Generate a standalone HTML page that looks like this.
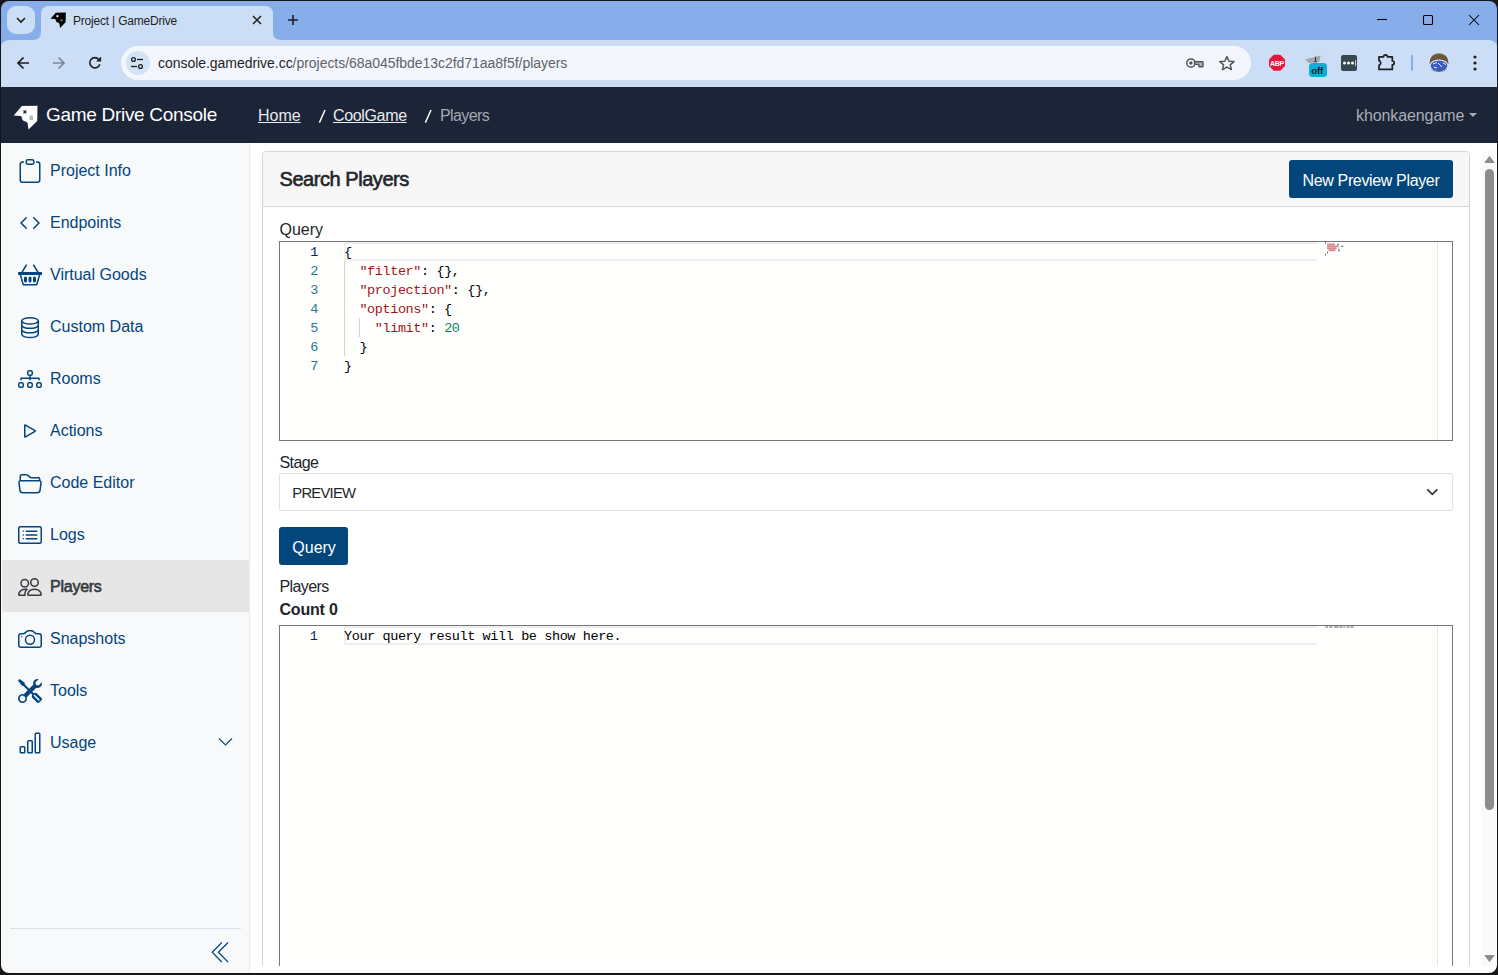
<!DOCTYPE html>
<html><head><meta charset="utf-8"><title>Project | GameDrive</title>
<style>
*{box-sizing:border-box;margin:0;padding:0}
html,body{width:1498px;height:975px;overflow:hidden;background:#fff;font-family:"Liberation Sans",sans-serif;position:relative}
.a{position:absolute}
.t{position:absolute;white-space:pre;line-height:1}
svg{position:absolute;overflow:visible}
#frame{position:absolute;left:1px;top:1px;width:1496px;height:972px;border-radius:8px;box-shadow:0 0 0 30px #171717;z-index:100;pointer-events:none}
#tabs{position:absolute;left:0;top:0;width:1498px;height:48px;background:#87adea}
#toolbar{position:absolute;left:0;top:40px;width:1498px;height:47px;background:#ccddf6;border-top-left-radius:9px;border-top-right-radius:9px}
#nav{position:absolute;left:0;top:87px;width:1498px;height:56px;background:#1c2438}
#side{position:absolute;left:0;top:143px;width:250px;height:832px;background:#f8f9fa;border-right:1px solid #e9ecef}
.ic{position:absolute;width:24px;height:24px;fill:#03457f}
.lbl{position:absolute;white-space:pre;line-height:1;font-size:16px;color:#03457f;left:50px}
</style></head><body>
<!-- ============ CHROME ============ -->
<div id="tabs"></div>
<div id="toolbar"></div>
<!-- tab search -->
<div class="a" style="left:7px;top:6px;width:28px;height:28px;border-radius:9px;background:#ccddf6"></div>
<svg width="1498" height="90" style="left:0;top:0">
  <path d="M17 18 L21 22 L25 18" fill="none" stroke="#1f1f1f" stroke-width="1.6"/>
  <!-- active tab -->
  <path d="M33 40 Q41 40 41 32 L41 14 Q41 6 49 6 L265 6 Q273 6 273 14 L273 32 Q273 40 281 40 Z" fill="#ccddf6"/>
  <!-- tab close -->
  <path d="M253 16 L261 24 M261 16 L253 24" stroke="#1f1f1f" stroke-width="1.5"/>
  <!-- new tab -->
  <path d="M293 15 V25 M288 20 H298" stroke="#1f1f1f" stroke-width="1.6"/>
  <!-- window controls -->
  <path d="M1377 19.5 H1387" stroke="#000" stroke-width="1.1"/>
  <rect x="1423.5" y="15.5" width="9" height="9" rx="1" fill="none" stroke="#000" stroke-width="1.1"/>
  <path d="M1469 15 L1479 25 M1479 15 L1469 25" stroke="#000" stroke-width="1.05"/>
  <!-- back/forward/reload -->
  <path d="M29 63 H18.5 M23.5 57.5 L18 63 L23.5 68.5" fill="none" stroke="#1f1f1f" stroke-width="1.7"/>
  <path d="M53 63 H63.5 M58.5 57.5 L64 63 L58.5 68.5" fill="none" stroke="#7d8797" stroke-width="1.7"/>
  <path d="M98.8 59.4 A5.1 5.1 0 1 0 99.8 64.2" fill="none" stroke="#1f1f1f" stroke-width="1.6"/>
  <path d="M96 61.6 H101.1 V56.5 Z" fill="#1f1f1f"/>
</svg>
<!-- favicon -->
<svg width="26" height="26" viewBox="0 0 26 26" style="left:49.6px;top:11.6px;width:16.8px;height:16.8px">
  <path d="M8.85 1.1 L24.5 0.75 L24.2 15.9 L15.5 24.6 L14.6 18 Q13.5 16.2 10.9 15.9 Q9 15 8.85 12.4 Q8.5 10.8 7.5 10.9 L0.8 10.5 Z" fill="#000"/>
  <rect x="10" y="5" width="3" height="3" fill="#fff"/>
  <rect x="16" y="11" width="3.5" height="3.5" fill="#666"/>
</svg>
<div class="t" style="left:73px;top:14.5px;font-size:12px;color:#1f1f1f;letter-spacing:-0.2px">Project | GameDrive</div>
<!-- omnibox -->
<div class="a" style="left:121px;top:46px;width:1130px;height:34px;border-radius:17px;background:#f3f6fc"></div>
<div class="a" style="left:126px;top:51px;width:24px;height:24px;border-radius:12px;background:#d3e2f7"></div>
<svg width="1498" height="90" style="left:0;top:0">
  <circle cx="133.5" cy="59.5" r="1.9" fill="none" stroke="#1f1f1f" stroke-width="1.3"/>
  <path d="M137 59.5 H143" stroke="#1f1f1f" stroke-width="1.3"/>
  <path d="M131 66.5 H137" stroke="#1f1f1f" stroke-width="1.3"/>
  <circle cx="140.5" cy="66.5" r="1.9" fill="none" stroke="#1f1f1f" stroke-width="1.3"/>
</svg>
<div class="t" style="left:158px;top:56px;font-size:14px;color:#1f1f1f;letter-spacing:-0.04px">console.gamedrive.cc<span style="color:#5f6368">/projects/68a045fbde13c2fd71aa8f5f/players</span></div>
<svg width="1498" height="90" style="left:0;top:0">
  <!-- key -->
  <circle cx="1190.9" cy="63" r="4.1" fill="none" stroke="#545454" stroke-width="1.5"/>
  <circle cx="1190.9" cy="63" r="1.7" fill="#545454"/>
  <path d="M1194.6 61.8 H1202.4 Q1203 61.8 1203 62.4 V66.2 Q1203 66.8 1202.4 66.8 H1199.4 Q1198.8 66.8 1198.8 66.2 V64.4 H1194.6 Z" fill="#b4b4b4" stroke="#545454" stroke-width="1.4" stroke-linejoin="round"/>
  <!-- star -->
  <path d="M1226.9 56.6 L1229 61.2 L1234 61.6 L1230.2 64.9 L1231.4 69.6 L1226.9 67.1 L1222.4 69.6 L1223.6 64.9 L1219.8 61.6 L1224.8 61.2 Z" fill="none" stroke="#555" stroke-width="1.5" stroke-linejoin="round"/>
  <!-- ABP -->
  <path d="M1273.7 54.8 H1280.3 L1285 59.5 V66.1 L1280.3 70.8 H1273.7 L1269 66.1 V59.5 Z" fill="#e8163a"/>
  <text x="1277" y="65.9" font-family="Liberation Sans" font-weight="bold" font-size="7" fill="#fff" text-anchor="middle" letter-spacing="-0.3">ABP</text>
  <!-- off ext -->
  <path d="M1305.2 59.5 L1320.6 55.5 L1319.4 62 L1308.8 63 Z" fill="#a6a6a6"/>
  <path d="M1315.5 56.8 V61.6 M1314.3 61.6 H1316.7" stroke="#333" stroke-width="1.1"/>
  <rect x="1309" y="62.9" width="18" height="14.1" rx="3.5" fill="#10acd6"/>
  <text x="1317.2" y="73.8" font-family="Liberation Sans" font-weight="bold" font-size="9.6" fill="#14202a" text-anchor="middle" letter-spacing="-0.2">off</text>
  <!-- dots ext -->
  <rect x="1341" y="55" width="16" height="16" rx="2" fill="#37474f"/>
  <circle cx="1344.5" cy="63" r="1.5" fill="#fff"/><circle cx="1348.5" cy="63" r="1.5" fill="#fff"/><circle cx="1352.5" cy="63" r="1.5" fill="#fff"/>
  <path d="M1355.5 60 V66" stroke="#ccc" stroke-width="1"/>
  <!-- puzzle -->
  <path d="M1379 56.8 H1383.6 A1.9 1.9 0 0 1 1387.4 56.8 H1392.3 V61 A1.9 1.9 0 0 1 1392.3 64.8 V69.4 H1379 V65.2 A2.4 2.4 0 0 0 1379 60.6 Z" fill="none" stroke="#1f1f1f" stroke-width="1.7" stroke-linejoin="round"/>
  <!-- separator -->
  <path d="M1412 55 V70.5" stroke="#87adea" stroke-width="2"/>
  <!-- avatar -->
  <defs><clipPath id="avc"><circle cx="1439" cy="63" r="10"/></clipPath></defs>
  <g clip-path="url(#avc)">
    <rect x="1429" y="53" width="20" height="20" fill="#ccddf6"/>
    <path d="M1429.5 64 Q1429.5 53 1439 53 Q1448.5 53 1448.5 64 Z" fill="#6b5640"/>
    <path d="M1432 56 Q1439 52 1446 56 L1446 55 Q1439 51 1432 55 Z" fill="#c09a6a"/>
    <ellipse cx="1439" cy="66" rx="9.6" ry="6.6" fill="#e9eef6"/>
    <ellipse cx="1439" cy="65.8" rx="8.4" ry="5.4" fill="#3a5cc0"/>
    <path d="M1433 64 L1437 62.5 M1438 63 L1442 67 M1443 63 L1446 64.5 M1434 67 L1437 68" stroke="#e8eef8" stroke-width="1"/>
    <path d="M1430 69 Q1439 74 1448 69" stroke="#555" stroke-width="0.8" fill="none"/>
  </g>
  <!-- kebab -->
  <circle cx="1475" cy="57" r="1.6" fill="#1f1f1f"/><circle cx="1475" cy="63" r="1.6" fill="#1f1f1f"/><circle cx="1475" cy="69" r="1.6" fill="#1f1f1f"/>
</svg>
<!-- ============ NAVBAR ============ -->
<div id="nav"></div>
<svg width="26" height="26" viewBox="0 0 26 26" style="left:13px;top:105px;width:26px;height:26px">
  <path d="M8.85 1.1 L24.5 0.75 L24.2 15.9 L15.5 24.6 L14.6 18 Q13.5 16.2 10.9 15.9 Q9 15 8.85 12.4 Q8.5 10.8 7.5 10.9 L0.8 10.5 Z" fill="#fff"/>
  <path d="M10.5 5.5 L13.3 8.3 M13.3 5.5 L10.5 8.3" stroke="#1c2438" stroke-width="1.2"/>
  <rect x="16.5" y="10.5" width="3.5" height="4.5" fill="#b8bcc6"/>
</svg>
<div class="t" style="left:46px;top:105px;font-size:19px;color:#fff;letter-spacing:-0.3px">Game Drive Console</div>
<div class="t" style="left:258px;top:108.4px;font-size:16px;color:#e9ebee;text-decoration:underline;text-underline-offset:1.2px">Home</div>

<div class="t" style="left:333px;top:108.4px;font-size:16px;color:#e9ebee;text-decoration:underline;text-underline-offset:1.2px;letter-spacing:-0.35px">CoolGame</div>

<div class="t" style="left:440px;top:108.4px;font-size:16px;color:#a4a8b0;letter-spacing:-0.6px">Players</div>
<svg width="1498" height="150" style="left:0;top:0"><path d="M325 110 L319.4 122.6 M431 110 L425.4 122.6" stroke="#ffffff" stroke-width="1.45"/></svg>
<div class="t" style="left:1356px;top:107.8px;font-size:16px;color:#a9adb5;letter-spacing:-0.1px">khonkaengame</div>
<svg width="1498" height="150" style="left:0;top:0"><path d="M1469 113 H1477 L1473 117 Z" fill="#a9adb5"/></svg>
<!-- ============ SIDEBAR ============ -->
<div id="side"></div>
<!-- icons -->
<svg class="ic" viewBox="0 0 16 16" style="left:18px;top:159px"><path d="M4 1.5H3a2 2 0 0 0-2 2V14a2 2 0 0 0 2 2h10a2 2 0 0 0 2-2V3.5a2 2 0 0 0-2-2h-1v1h1a1 1 0 0 1 1 1V14a1 1 0 0 1-1 1H3a1 1 0 0 1-1-1V3.5a1 1 0 0 1 1-1h1z"/><path d="M9.5 1a.5.5 0 0 1 .5.5v1a.5.5 0 0 1-.5.5h-3a.5.5 0 0 1-.5-.5v-1a.5.5 0 0 1 .5-.5zm-3-1A1.5 1.5 0 0 0 5 1.5v1A1.5 1.5 0 0 0 6.5 4h3A1.5 1.5 0 0 0 11 2.5v-1A1.5 1.5 0 0 0 9.5 0z"/></svg>
<div class="lbl" style="top:162.5px">Project Info</div>
<svg class="ic" viewBox="0 0 16 16" style="left:18px;top:211px"><path d="M5.854 4.854a.5.5 0 1 0-.708-.708l-3.5 3.5a.5.5 0 0 0 0 .708l3.5 3.5a.5.5 0 0 0 .708-.708L2.707 8zm4.292 0a.5.5 0 0 1 .708-.708l3.5 3.5a.5.5 0 0 1 0 .708l-3.5 3.5a.5.5 0 0 1-.708-.708L13.293 8z"/></svg>
<div class="lbl" style="top:214.5px">Endpoints</div>
<svg class="ic" viewBox="0 0 16 16" style="left:18px;top:263px"><path d="M4 10a1 1 0 0 1 2 0v2a1 1 0 0 1-2 0zm3 0a1 1 0 0 1 2 0v2a1 1 0 0 1-2 0zm3 0a1 1 0 1 1 2 0v2a1 1 0 0 1-2 0z"/><path d="M5.757 1.071a.5.5 0 0 1 .172.686L3.383 6h9.234L10.07 1.757a.5.5 0 1 1 .858-.514L13.783 6H15.5a.5.5 0 0 1 .5.5v1a.5.5 0 0 1-.5.5h-.623l-1.844 6.456a.75.75 0 0 1-.722.544H3.69a.75.75 0 0 1-.722-.544L1.123 8H.5a.5.5 0 0 1-.5-.5v-1A.5.5 0 0 1 .5 6h1.717L5.07 1.243a.5.5 0 0 1 .686-.172zM2.163 8l1.714 6h8.246l1.714-6z"/></svg>
<div class="lbl" style="top:266.5px">Virtual Goods</div>
<svg class="ic" viewBox="0 0 16 16" style="left:18px;top:315px"><g fill="none" stroke="#03457f" stroke-width="1"><ellipse cx="8" cy="3.9" rx="5.5" ry="2.1"/><path d="M2.5 3.9 V12.9 A5.5 2.1 0 0 0 13.5 12.9 V3.9"/><path d="M2.5 6.8 A5.5 2.1 0 0 0 13.5 6.8 M2.5 9.8 A5.5 2.1 0 0 0 13.5 9.8"/></g></svg>
<div class="lbl" style="top:318.5px">Custom Data</div>
<svg class="ic" viewBox="0 0 16 16" style="left:18px;top:367px"><path fill-rule="evenodd" d="M6 3.5A1.5 1.5 0 0 1 7.5 2h1A1.5 1.5 0 0 1 10 3.5v1A1.5 1.5 0 0 1 8.5 6v1H14a.5.5 0 0 1 .5.5v1a.5.5 0 0 1-1 0V8h-5v.5a.5.5 0 0 1-1 0V8h-5v.5a.5.5 0 0 1-1 0v-1A.5.5 0 0 1 2 7h5.5V6A1.5 1.5 0 0 1 6 4.5zM8.5 5a.5.5 0 0 0 .5-.5v-1a.5.5 0 0 0-.5-.5h-1a.5.5 0 0 0-.5.5v1a.5.5 0 0 0 .5.5zM0 11.5A1.5 1.5 0 0 1 1.5 10h1A1.5 1.5 0 0 1 4 11.5v1A1.5 1.5 0 0 1 2.5 14h-1A1.5 1.5 0 0 1 0 12.5zm1.5-.5a.5.5 0 0 0-.5.5v1a.5.5 0 0 0 .5.5h1a.5.5 0 0 0 .5-.5v-1a.5.5 0 0 0-.5-.5zm4.5.5A1.5 1.5 0 0 1 7.5 10h1a1.5 1.5 0 0 1 1.5 1.5v1A1.5 1.5 0 0 1 8.5 14h-1A1.5 1.5 0 0 1 6 12.5zm1.5-.5a.5.5 0 0 0-.5.5v1a.5.5 0 0 0 .5.5h1a.5.5 0 0 0 .5-.5v-1a.5.5 0 0 0-.5-.5zm4.5.5a1.5 1.5 0 0 1 1.5-1.5h1a1.5 1.5 0 0 1 1.5 1.5v1a1.5 1.5 0 0 1-1.5 1.5h-1a1.5 1.5 0 0 1-1.5-1.5zm1.5-.5a.5.5 0 0 0-.5.5v1a.5.5 0 0 0 .5.5h1a.5.5 0 0 0 .5-.5v-1a.5.5 0 0 0-.5-.5z"/></svg>
<div class="lbl" style="top:370.5px">Rooms</div>
<svg class="ic" viewBox="0 0 16 16" style="left:18px;top:419px"><path d="M10.804 8 5 4.633v6.734zm.792-.696a.802.802 0 0 1 0 1.392l-6.363 3.692C4.713 12.69 4 12.345 4 11.692V4.308c0-.653.713-.998 1.233-.696z"/></svg>
<div class="lbl" style="top:422.5px">Actions</div>
<svg class="ic" viewBox="0 0 16 16" style="left:18px;top:471px"><path d="M1 3.5A1.5 1.5 0 0 1 2.5 2h2.764c.958 0 1.76.56 2.311 1.184C7.985 3.648 8.48 4 9 4h4.5A1.5 1.5 0 0 1 15 5.5v.64c.57.265.94.876.856 1.546l-.64 5.124A2.5 2.5 0 0 1 12.733 15H3.266a2.5 2.5 0 0 1-2.481-2.19l-.64-5.124A1.5 1.5 0 0 1 1 6.14zM2 6h12v-.5a.5.5 0 0 0-.5-.5H9c-.964 0-1.71-.629-2.174-1.154C6.374 3.334 5.82 3 5.264 3H2.5a.5.5 0 0 0-.5.5zm-.367 1a.5.5 0 0 0-.496.562l.64 5.124A1.5 1.5 0 0 0 3.266 14h9.468a1.5 1.5 0 0 0 1.489-1.314l.64-5.124A.5.5 0 0 0 14.367 7z"/></svg>
<div class="lbl" style="top:474.5px">Code Editor</div>
<svg class="ic" viewBox="0 0 16 16" style="left:18px;top:523px"><path d="M14.5 3a.5.5 0 0 1 .5.5v9a.5.5 0 0 1-.5.5h-13a.5.5 0 0 1-.5-.5v-9a.5.5 0 0 1 .5-.5zm-13-1A1.5 1.5 0 0 0 0 3.5v9A1.5 1.5 0 0 0 1.5 14h13a1.5 1.5 0 0 0 1.5-1.5v-9A1.5 1.5 0 0 0 14.5 2z"/><path d="M5 8a.5.5 0 0 1 .5-.5h7a.5.5 0 0 1 0 1h-7A.5.5 0 0 1 5 8m0-2.5a.5.5 0 0 1 .5-.5h7a.5.5 0 0 1 0 1h-7a.5.5 0 0 1-.5-.5m0 5a.5.5 0 0 1 .5-.5h7a.5.5 0 0 1 0 1h-7a.5.5 0 0 1-.5-.5m-1-5a.5.5 0 1 1-1 0 .5.5 0 0 1 1 0M4 8a.5.5 0 1 1-1 0 .5.5 0 0 1 1 0m0 2.5a.5.5 0 1 1-1 0 .5.5 0 0 1 1 0"/></svg>
<div class="lbl" style="top:526.5px">Logs</div>
<div class="a" style="left:2px;top:560px;width:247px;height:52px;border-radius:1.5px;background:#e6e6e6"></div>
<svg class="ic" viewBox="0 0 16 16" style="left:18px;top:575px;fill:#343a40"><path d="M15 14s1 0 1-1-1-4-5-4-5 3-5 4 1 1 1 1zm-7.978-1L7 12.996c.001-.264.167-1.03.76-1.72C8.312 10.629 9.282 10 11 10c1.717 0 2.687.63 3.24 1.276.593.69.758 1.457.76 1.72l-.008.002-.014.002zM11 7a2 2 0 1 0 0-4 2 2 0 0 0 0 4m3-2a3 3 0 1 1-6 0 3 3 0 0 1 6 0M6.936 9.28a6 6 0 0 0-1.23-.247A7 7 0 0 0 5 9c-4 0-5 3-5 4q0 1 1 1h4.216A2.24 2.24 0 0 1 5 13c0-1.01.377-2.042 1.09-2.904.243-.294.526-.569.846-.816M4.92 10A5.5 5.5 0 0 0 4 13H1c0-.26.164-1.03.76-1.724.545-.636 1.492-1.256 3.16-1.275ZM1.5 5.5a3 3 0 1 1 6 0 3 3 0 0 1-6 0m3-2a2 2 0 1 0 0 4 2 2 0 0 0 0-4"/></svg>
<div class="lbl" style="top:578.5px;color:#343a40;letter-spacing:-0.25px;-webkit-text-stroke:0.6px #343a40">Players</div>
<svg class="ic" viewBox="0 0 16 16" style="left:18px;top:627px"><path d="M15 12a1 1 0 0 1-1 1H2a1 1 0 0 1-1-1V6a1 1 0 0 1 1-1h1.172a3 3 0 0 0 2.12-.879l.83-.828A1 1 0 0 1 6.827 3h2.344a1 1 0 0 1 .707.293l.828.828A3 3 0 0 0 12.828 5H14a1 1 0 0 1 1 1zM2 4a2 2 0 0 0-2 2v6a2 2 0 0 0 2 2h12a2 2 0 0 0 2-2V6a2 2 0 0 0-2-2h-1.172a2 2 0 0 1-1.414-.586l-.828-.828A2 2 0 0 0 9.172 2H6.828a2 2 0 0 0-1.414.586l-.828.828A2 2 0 0 1 3.172 4z"/><path d="M8 11a2.5 2.5 0 1 1 0-5 2.5 2.5 0 0 1 0 5m0 1a3.5 3.5 0 1 0 0-7 3.5 3.5 0 0 0 0 7M3 6.5a.5.5 0 1 1-1 0 .5.5 0 0 1 1 0"/></svg>
<div class="lbl" style="top:630.5px">Snapshots</div>
<svg class="ic" viewBox="0 0 16 16" style="left:18px;top:679px"><path d="M1 0 0 1l2.2 3.081a1 1 0 0 0 .815.419h.07a1 1 0 0 1 .708.293l2.675 2.675-2.617 2.654A3.003 3.003 0 0 0 0 13a3 3 0 1 0 5.878-.851l2.654-2.617.968.968-.305.914a1 1 0 0 0 .242 1.023l3.27 3.27a.997.997 0 0 0 1.414 0l1.586-1.586a.997.997 0 0 0 0-1.414l-3.27-3.27a1 1 0 0 0-1.023-.242L10.5 9.5l-.96-.96 2.68-2.643A3.005 3.005 0 0 0 16 3q0-.405-.102-.777l-2.14 2.141L12 4l-.364-1.757L13.777.102a3 3 0 0 0-3.675 3.68L7.462 6.46 4.793 3.793a1 1 0 0 1-.293-.707v-.071a1 1 0 0 0-.419-.814zm9.646 10.646a.5.5 0 0 1 .708 0l2.914 2.915a.5.5 0 0 1-.707.707l-2.915-2.914a.5.5 0 0 1 0-.708M3 11l.471.242.529.026.287.445.445.287.026.529L5 13l-.242.471-.026.529-.445.287-.287.445-.529.026L3 15l-.471-.242L2 14.732l-.287-.445L1.268 14l-.026-.529L1 13l.242-.471.026-.529.445-.287.287-.445.529-.026z"/></svg>
<div class="lbl" style="top:682.5px">Tools</div>
<svg class="ic" viewBox="0 0 16 16" style="left:18px;top:731px"><path d="M4 11H2v3h2zm5-4H7v7h2zm5-5v12h-2V2zm-2-1a1 1 0 0 0-1 1v12a1 1 0 0 0 1 1h2a1 1 0 0 0 1-1V2a1 1 0 0 0-1-1zM6 7a1 1 0 0 1 1-1h2a1 1 0 0 1 1 1v7a1 1 0 0 1-1 1H7a1 1 0 0 1-1-1zm-5 4a1 1 0 0 1 1-1h2a1 1 0 0 1 1 1v3a1 1 0 0 1-1 1H2a1 1 0 0 1-1-1z"/></svg>
<div class="lbl" style="top:734.5px">Usage</div>
<svg width="1498" height="975" style="left:0;top:0">
  <path d="M219 738.5 L225.5 745 L232 738.5" fill="none" stroke="#03457f" stroke-width="1.1"/>
  <path d="M10 928.5 H241" stroke="#dde1e6" stroke-width="1"/>
  <path d="M221.8 942.5 L212.2 952.2 L221.8 962 M228 942.5 L218.4 952.2 L228 962" fill="none" stroke="#03457f" stroke-width="1.25"/>
</svg>
<!-- ============ MAIN ============ -->
<div class="a" style="left:0;top:0;width:1498px;height:975px;clip:rect(143px,1482px,966px,250px)">
  <div class="a" style="left:262px;top:151px;width:1208px;height:900px;border:1px solid #d5d5d5;border-radius:4px;overflow:hidden">
    <div class="a" style="left:0;top:0;width:1206px;height:55px;background:#f7f7f7;border-bottom:1px solid #d5d5d5"></div>
  </div>
  <div class="t" style="left:279.5px;top:168.9px;font-size:20px;color:#212529;letter-spacing:-0.45px;-webkit-text-stroke:0.6px #212529">Search Players</div>
  <div class="a" style="left:1289px;top:160px;width:164px;height:38px;border-radius:3px;background:#02467c"></div>
  <div class="t" style="left:1302.5px;top:172.9px;font-size:16px;color:#fff;letter-spacing:-0.35px">New Preview Player</div>
  <div class="t" style="left:279.5px;top:222.3px;font-size:16px;color:#212529">Query</div>
  <!-- editor 1 -->
  <div class="a" style="left:279px;top:241px;width:1174px;height:200px;border:1px solid #767676;background:#fffffe"></div>
  <div class="a" style="left:344px;top:242px;width:973px;height:19px;border:2px solid #eeeeee;border-right:none"></div>
  <div class="a" style="left:1437px;top:242px;width:1px;height:198px;background:#e6e6e6"></div>
  <div class="a" style="left:344px;top:261px;width:1px;height:95px;background:#d3d3d3"></div>
  <div class="a" style="left:359px;top:318px;width:1px;height:19px;background:#d3d3d3"></div>
  <pre class="a" style="left:289px;top:243px;width:29px;text-align:right;font-family:'Liberation Mono',monospace;font-size:13.5px;line-height:19px;color:#237893;letter-spacing:-0.4px"><span style="color:#0b216f">1</span>
2
3
4
5
6
7</pre>
  <pre class="a" style="left:344px;top:243px;font-family:'Liberation Mono',monospace;font-size:13.5px;line-height:19px;color:#000;letter-spacing:-0.4px">{
  <span style="color:#a31515">"filter"</span>: {},
  <span style="color:#a31515">"projection"</span>: {},
  <span style="color:#a31515">"options"</span>: {
    <span style="color:#a31515">"limit"</span>: <span style="color:#098658">20</span>
  }
}</pre>
  <svg width="40" height="20" style="left:1320px;top:240px">
    <path d="M5.5 1.5 V3.5 M5.5 13.5 V15.5 M7.5 11.5 V13.5" stroke="#666" stroke-width="1"/>
    <path d="M7 4.4 H15 M7 6.4 H19 M7 8.4 H16.5 M8.5 10.4 H15.5" stroke="#d98a8e" stroke-width="1.7"/>
    <path d="M17 4.4 H19 M21 6.4 H23.5 M18.5 8.5 V9.5" stroke="#8a8a8a" stroke-width="1.3"/>
    <path d="M18 10.5 H20" stroke="#3aa67a" stroke-width="1.6"/>
  </svg>
  <div class="t" style="left:279.5px;top:454.6px;font-size:16px;color:#212529;letter-spacing:-0.6px">Stage</div>
  <div class="a" style="left:279px;top:473px;width:1174px;height:38px;border:1px solid #dee2e6;border-radius:2.5px;background:#fff"></div>
  <div class="t" style="left:292.3px;top:486px;font-size:14.8px;color:#212529;letter-spacing:-0.75px">PREVIEW</div>
  <svg width="20" height="20" style="left:1420px;top:480px"><path d="M7.3 9.3 L12.3 14.3 L17.3 9.3" fill="none" stroke="#343a40" stroke-width="1.8"/></svg>
  <div class="a" style="left:279px;top:527px;width:69px;height:38px;border-radius:3px;background:#02467c"></div>
  <div class="t" style="left:292.3px;top:539.6px;font-size:16px;color:#fff">Query</div>
  <div class="t" style="left:279.5px;top:579px;font-size:16px;color:#212529;letter-spacing:-0.6px">Players</div>
  <div class="t" style="left:279.5px;top:601.8px;font-size:16px;font-weight:bold;color:#212529;letter-spacing:-0.2px">Count 0</div>
  <!-- editor 2 -->
  <div class="a" style="left:279px;top:625px;width:1174px;height:400px;border:1px solid #767676;background:#fffffe"></div>
  <div class="a" style="left:344px;top:626px;width:973px;height:19px;border:2px solid #eeeeee;border-right:none"></div>
  <div class="a" style="left:1437px;top:626px;width:1px;height:398px;background:#e6e6e6"></div>
  <pre class="a" style="left:288.5px;top:626.9px;width:29px;text-align:right;font-family:'Liberation Mono',monospace;font-size:13.5px;line-height:19px;color:#0b216f;letter-spacing:-0.4px">1</pre>
  <pre class="a" style="left:344px;top:627px;font-family:'Liberation Mono',monospace;font-size:13.5px;line-height:19px;color:#000;letter-spacing:-0.4px">Your query result will be show here.</pre>
  <svg width="40" height="6" style="left:1325px;top:626px"><path d="M0.5 1 H3 M4 1 H7.5 M9 1 H13.5 M14.5 1 H17.5 M18.5 1 H20 M21.5 1 H24.5 M25.5 1 H28.5" stroke="#333" stroke-width="1.2" opacity="0.8"/></svg>
</div>
<!-- scrollbar -->
<div class="a" style="left:1482px;top:151px;width:15px;height:815px;background:#fafafa"></div>
<svg width="1498" height="975" style="left:0;top:0">
  <path d="M1489.5 156.5 L1494 162.5 L1485 162.5 Z" fill="#8c8c8c" stroke="#8c8c8c" stroke-width="1" stroke-linejoin="round"/>
  <rect x="1485" y="169" width="9" height="641" rx="4.5" fill="#8c8c8c"/>
  <path d="M1489.5 961.5 L1494 955.5 L1485 955.5 Z" fill="#8c8c8c" stroke="#8c8c8c" stroke-width="1" stroke-linejoin="round"/>
</svg>
<div id="frame"></div>
</body></html>
